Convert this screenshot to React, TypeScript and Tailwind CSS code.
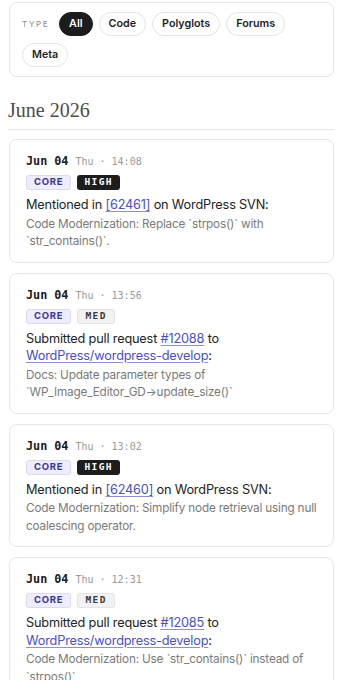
const sans = { fontFamily: 'Inter, "Noto Sans", sans-serif' };
const mono = { fontFamily: '"DejaVu Sans Mono", monospace' };

type Item = {
  time: string;
  level: "HIGH" | "MED";
  title: React.ReactNode;
  desc: string;
};

function A({ children }: { children: React.ReactNode }) {
  return (
    <a href="#" className="text-[#4a50c2] underline underline-offset-2 decoration-[#8d90d8]">
      {children}
    </a>
  );
}

const items: Item[] = [
  {
    time: "14:08",
    level: "HIGH",
    title: (
      <>
        Mentioned in <A>[62461]</A> on WordPress SVN:
      </>
    ),
    desc: "Code Modernization: Replace `strpos()` with `str_contains()`.",
  },
  {
    time: "13:56",
    level: "MED",
    title: (
      <>
        Submitted pull request <A>#12088</A> to <A>WordPress/wordpress-develop</A>:
      </>
    ),
    desc: "Docs: Update parameter types of `WP_Image_Editor_GD→update_size()`",
  },
  {
    time: "13:02",
    level: "HIGH",
    title: (
      <>
        Mentioned in <A>[62460]</A> on WordPress SVN:
      </>
    ),
    desc: "Code Modernization: Simplify node retrieval using null coalescing operator.",
  },
  {
    time: "12:31",
    level: "MED",
    title: (
      <>
        Submitted pull request <A>#12085</A> to <A>WordPress/wordpress-develop</A>:
      </>
    ),
    desc: "Code Modernization: Use `str_contains()` instead of `strpos()`",
  },
];

const filters = ["All", "Code", "Polyglots", "Forums", "Meta"];

export default function App() {
  return (
    <div className="min-h-screen bg-white pl-[9px] pr-[10px] pb-6" style={sans}>
      {/* Filters */}
      <div className="mt-[2px] rounded-lg border border-[#e6e6e6] px-3 py-[9px] flex flex-wrap items-center gap-x-[6px] gap-y-[7px]">
        <span className="text-[8px] tracking-[0.2em] text-[#8a8a8a] mr-[4px]">TYPE</span>
        {filters.map((f) => (
          <button
            key={f}
            className={
              f === "All"
                ? "h-[24px] px-[9px] rounded-full bg-[#1c1c1c] text-white text-[10.75px] font-semibold border border-[#1c1c1c]"
                : "h-[24px] px-[9px] rounded-full bg-white text-[#1f1f1f] text-[10.75px] font-semibold border border-[#e3e3e3]"
            }
          >
            {f}
          </button>
        ))}
      </div>

      {/* Month */}
      <h2
        className="mt-[19px] pb-[5px] border-b border-[#e6e6e6] text-[20px] leading-[28px] text-[#4d4d4d] -ml-[1px]"
        style={{ fontFamily: '"Liberation Serif", serif' }}
      >
        June 2026
      </h2>

      {/* Activity */}
      <div className="mt-[9px] flex flex-col gap-[10px]">
        {items.map((it, i) => (
          <div key={i} className="rounded-lg border border-[#e6e6e6] pl-4 pr-[14px] pt-[12px] pb-[11px]">
            <div className="flex items-baseline gap-[7px] leading-[18px]" style={mono}>
              <span className="text-[11.75px] font-bold text-[#1a1a1a]">Jun 04</span>
              <span className="text-[10px] text-[#9a9a9a]">Thu · {it.time}</span>
            </div>
            <div className="mt-[4px] flex gap-[6px]">
              <span className="h-[15px] px-[7px] flex items-center rounded-[3px] bg-[#eeedfb] border border-[#dcdaf3] text-[9.5px] font-bold tracking-[0.08em] text-[#3b3894]">
                CORE
              </span>
              {it.level === "HIGH" ? (
                <span
                  className="h-[15px] px-[7px] flex items-center rounded-[3px] bg-[#1d1d1d] text-[9.5px] font-bold tracking-[0.15em] text-white"
                  style={mono}
                >
                  HIGH
                </span>
              ) : (
                <span
                  className="h-[15px] px-[7px] flex items-center rounded-[3px] bg-[#f2f2f2] border border-[#e4e4e4] text-[9.5px] font-bold tracking-[0.15em] text-[#3a3a3a]"
                  style={mono}
                >
                  MED
                </span>
              )}
            </div>
            <p className="mt-[6px] text-[12.75px] tracking-[-0.015em] leading-[17.5px] text-[#232323]">{it.title}</p>
            <p className="mt-[2px] text-[11.75px] tracking-[-0.015em] leading-[17.5px] text-[#7a7a7a]">{it.desc}</p>
          </div>
        ))}
      </div>
    </div>
  );
}
